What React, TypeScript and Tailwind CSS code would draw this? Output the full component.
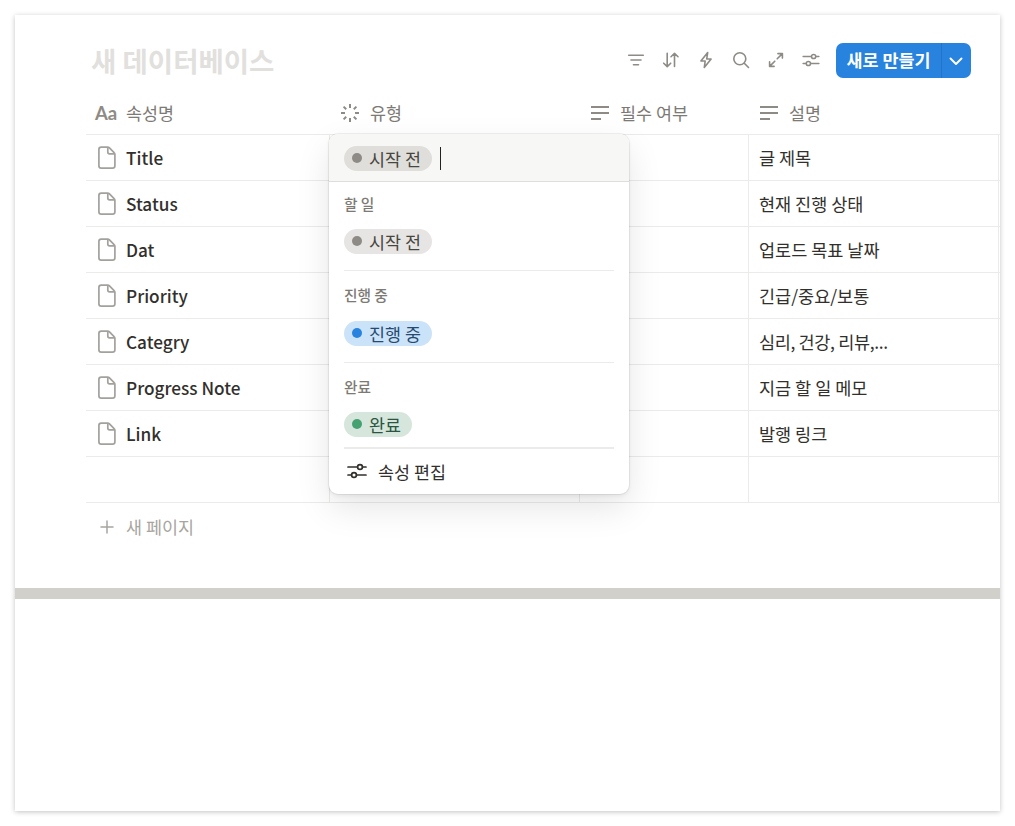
import React from 'react';

const rows = [
  { name: 'Title', desc: '글 제목' },
  { name: 'Status', desc: '현재 진행 상태' },
  { name: 'Dat', desc: '업로드 목표 날짜' },
  { name: 'Priority', desc: '긴급/중요/보통' },
  { name: 'Categry', desc: '심리, 건강, 리뷰,...', tight: true },
  { name: 'Progress Note', desc: '지금 할 일 메모' },
  { name: 'Link', desc: '발행 링크' },
  { name: '', desc: '' },
];

const GRID = 'grid grid-cols-[244px_250px_169px_250px]';

const PageIcon: React.FC = () => (
  <svg className="mt-px" width="18" height="24" viewBox="0 0 18 24" fill="none" stroke="#a3a19c" strokeWidth="1.7" strokeLinejoin="round">
    <path d="M3.2 1.100h6.600q.8 0 1.400.6l4.900 5q.8.6.8 1.600v11.400q0 2.400-2.400 2.400H3.300q-2.400 0-2.400-2.400V3.500q0-2.400 2.300-2.400Z" />
    <path d="M9.800 1.500v4.600q0 1.800 1.800 1.800h4.900" />
  </svg>
);

const TextIcon: React.FC = () => (
  <svg width="18" height="16" viewBox="0 0 18 16" fill="none" stroke="#8e8b86" strokeWidth="2">
    <path d="M0 2h18M0 8h18M0 14h10" />
  </svg>
);

const SpinnerIcon: React.FC = () => (
  <svg width="18" height="18" viewBox="0 0 18 18" fill="none" stroke="#8e8b86" strokeWidth="2">
    <path d="M9 0v4M9 14v4M0 9h4M14 9h4M2.600 2.600l2.600 2.600M12.800 12.800l2.600 2.600M2.600 15.400l2.600-2.600M12.800 5.200l2.600-2.600" />
  </svg>
);

const SlidersIcon: React.FC<{ className?: string }> = ({ className }) => (
  <svg className={className} viewBox="0 0 20 16" fill="none" stroke="currentColor" strokeWidth="1.7" strokeLinecap="round">
    <path d="M1 4h9.300M15.700 4H19M1 12h3.300M9.700 12H19" />
    <circle cx="13" cy="4" r="2.400" />
    <circle cx="7" cy="12" r="2.400" />
  </svg>
);

const Tag: React.FC<{ label: string; pill: string; dot: string }> = ({ label, pill, dot }) => (
  <span className={`flex h-[25px] w-fit items-center rounded-full pl-2 pr-[11px] text-[17.4px] whitespace-nowrap ${pill}`}>
    <span className={`mr-[7px] mb-px size-[10px] rounded-full ${dot}`} />
    <span className="leading-none">{label}</span>
  </span>
);

const StatusMenu: React.FC = () => (
  <div className="absolute left-[314px] top-[119px] h-[360px] w-[300px] overflow-visible rounded-[9px] bg-white shadow-[0_0_0_1px_rgba(0,0,0,0.06),0_2px_4px_rgba(0,0,0,0.06),0_14px_34px_rgba(0,0,0,0.10)]">
    <div className="flex h-12 items-center rounded-t-[9px] border-b border-[#dededc] bg-[#f7f7f5] px-[15px] pt-0.5">
      <Tag label="시작 전" pill="bg-[#dfdeda] text-[#474540]" dot="bg-[#8e8b86]" />
      <span className="ml-2 h-[23px] w-px bg-[#222]" />
    </div>
    <div className="px-[15px]">
      <div className="h-[89px] border-b border-[#ebebea] pt-[14px]">
        <div className="mb-[18px] h-[15px] text-[14.7px] font-medium leading-[15px] text-[#7d7a75]">할 일</div>
        <Tag label="시작 전" pill="bg-[#e6e5e3] text-[#474540]" dot="bg-[#8e8b86]" />
      </div>
      <div className="h-[92px] border-b border-[#ebebea] pt-4">
        <div className="mb-[19px] h-[15px] text-[14.7px] font-medium leading-[15px] text-[#7d7a75]">진행 중</div>
        <Tag label="진행 중" pill="bg-[#cbe3f8] text-[#264a72]" dot="bg-[#2783de]" />
      </div>
      <div className="h-[86px] border-b-2 border-[#ebebea] pt-4">
        <div className="mb-[18px] h-[15px] text-[14.7px] font-medium leading-[15px] text-[#7d7a75]">완료</div>
        <Tag label="완료" pill="bg-[#d6e6dc] text-[#2a5540]" dot="bg-[#46a171]" />
      </div>
      <div className="flex h-[45px] items-center pl-[3px] text-[17.4px] text-[#32302c]">
        <SlidersIcon className="mr-[11px] mb-px h-4 w-5" />
        <span className="leading-none">속성 편집</span>
      </div>
    </div>
  </div>
);

const Toolbar: React.FC = () => (
  <div className="flex items-center text-[#8e8b86]">
    <div className="mr-4 mb-0.5 flex items-center gap-[17px]">
      <svg width="18" height="18" viewBox="0 0 18 18" fill="none" stroke="currentColor" strokeWidth="1.6" strokeLinecap="round">
        <path d="M1.700 4.300h14.600M4 9h10M6.500 13.700h5" />
      </svg>
      <svg width="18" height="18" viewBox="0 0 18 18" fill="none" stroke="currentColor" strokeWidth="1.6" strokeLinecap="round" strokeLinejoin="round">
        <path d="M5.200 2.300v13.200M1.700 12.200l3.500 3.400 3.500-3.400M12.500 15.500V2.300M9 5.700l3.500-3.400L16 5.700" />
      </svg>
      <svg width="18" height="18" viewBox="0 0 18 18" fill="none" stroke="currentColor" strokeWidth="1.6" strokeLinejoin="round">
        <path d="M10.700 1.600 3.900 10h4.300l-.9 6.500L14.100 8H9.700Z" />
      </svg>
      <svg width="18" height="18" viewBox="0 0 18 18" fill="none" stroke="currentColor" strokeWidth="1.6" strokeLinecap="round">
        <circle cx="7.800" cy="7.800" r="6" />
        <path d="m12.300 12.300 4.200 4.200" />
      </svg>
      <svg width="18" height="18" viewBox="0 0 18 18" fill="none" stroke="currentColor" strokeWidth="1.6" strokeLinecap="round" strokeLinejoin="round">
        <path d="M10.900 2.600h4.500v4.500M15.400 2.600l-5.200 5.200M7.100 15.400H2.600v-4.500M2.600 15.400l5.200-5.200" />
      </svg>
      <SlidersIcon className="h-[14px] w-[18px]" />
    </div>
    <div className="flex h-[35px] w-[135px] overflow-hidden rounded-[7px] bg-[#2783de] text-white">
      <button className="w-[106px] border-r border-[#2374c6] pb-0.5 text-[17.4px] font-bold leading-none whitespace-nowrap">새로 만들기</button>
      <button className="flex flex-1 items-center justify-center pt-0.5 pr-px">
        <svg width="14" height="9" viewBox="0 0 14 9" fill="none" stroke="currentColor" strokeWidth="1.9" strokeLinecap="round" strokeLinejoin="round">
          <path d="m1.500 1.500 5.500 5.500 5.500-5.500" />
        </svg>
      </button>
    </div>
  </div>
);

const App: React.FC = () => {
  return (
    <div className="h-[826px] bg-white px-[15px] pt-[15px] font-['Noto_Sans_CJK_KR',sans-serif]">
      <div className="relative h-[796px] overflow-visible bg-white shadow-[0_1px_5px_rgba(0,0,0,0.24)]">
        <div className="flex h-[63px] items-end justify-between pl-[77px] pr-[29px]">
          <h1 className="-ml-px pb-1 text-[27.5px] font-bold leading-none text-[#e1e0dd]">새 데이터베이스</h1>
          <Toolbar />
        </div>

        <div className="ml-[71px] w-[914px] overflow-hidden">
          <div className={`${GRID} h-[57px] items-center border-b border-[#ebebea] pt-[14px] text-[17.4px] text-[#7d7a75]`}>
            <div className="flex items-center pl-[9px]">
              <span className="w-[31px] font-['Lato',sans-serif] text-[18.5px] font-bold leading-none text-[#8e8b86]">Aa</span>
              <span className="leading-none">속성명</span>
            </div>
            <div className="flex items-center gap-[11px] pl-[11px]">
              <SpinnerIcon />
              <span className="leading-none">유형</span>
            </div>
            <div className="flex items-center gap-[11px] pl-[11px]">
              <TextIcon />
              <span className="leading-none">필수 여부</span>
            </div>
            <div className="flex items-center gap-[11px] pl-[11px]">
              <TextIcon />
              <span className="leading-none">설명</span>
            </div>
          </div>
          {rows.map((r, i) => (
            <div key={i} className={`${GRID} h-[46px] border-b border-[#ebebea] text-[17.5px] text-[#32302c]`}>
              <div className="flex items-center border-r border-[#ebebea] pl-3">
                {r.name && (
                  <>
                    <PageIcon />
                    <span className="ml-[10px] text-[17.2px] font-medium leading-none">{r.name}</span>
                  </>
                )}
              </div>
              <div className="border-r border-[#ebebea]" />
              <div className="border-r border-[#ebebea]" />
              <div className={`flex items-center border-r border-[#ebebea] pl-[10px] leading-none ${r.tight ? 'tracking-[-0.35px]' : ''}`}>
                {r.desc}
              </div>
            </div>
          ))}
          <div className="flex h-12 items-center pl-[14px] text-[17.4px] text-[#a8a5a0]">
            <svg className="mb-px" width="14" height="14" viewBox="0 0 14 14" fill="none" stroke="currentColor" strokeWidth="1.5" strokeLinecap="round">
              <path d="M7 1v12M1 7h12" />
            </svg>
            <span className="ml-3 leading-none">새 페이지</span>
          </div>
        </div>

        <div className="mt-[37px] h-[11px] bg-[#d1d0ca]" />
        <StatusMenu />
      </div>
    </div>
  );
};

export default App;
